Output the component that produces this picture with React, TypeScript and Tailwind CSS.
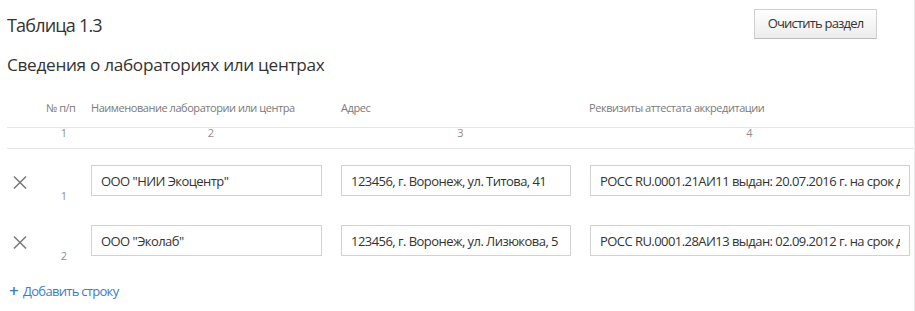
import React from 'react'

const rows = [
    {
        n: 1,
        name: 'ООО "НИИ Экоцентр"',
        address: '123456, г. Воронеж, ул. Титова, 41',
        cert: 'РОСС RU.0001.21АИ11 выдан: 20.07.2016 г. на срок до 20.07.2021 г.'
    },
    {
        n: 2,
        name: 'ООО "Эколаб"',
        address: '123456, г. Воронеж, ул. Лизюкова, 5',
        cert: 'РОСС RU.0001.28АИ13 выдан: 02.09.2012 г. на срок до 02.09.2017 г.'
    }
]

const grid = 'grid grid-cols-[37px_42px_250px_249px_329px]'
const field =
    'h-[31px] border border-[#d2d2d2] bg-white px-[9px] text-[13px] text-[#333] tracking-[-0.55px] outline-none'

function CloseIcon() {
    return (
        <svg width="14" height="13" viewBox="0 0 14 13" className="block">
            <path
                d="M1 0.5 L13 12.5 M13 0.5 L1 12.5"
                stroke="#7a7a7a"
                strokeWidth="1.5"
                fill="none"
            />
        </svg>
    )
}

export default function App() {
    return (
        <div className="w-[915px] h-[311px] bg-white border-r border-[#ececec] pl-[7px] font-['Open_Sans',sans-serif] text-[#333]">
            <div className="flex justify-between items-start pt-[9px] pr-[37px]">
                <h1 className="text-[18px] leading-[24px] pt-[4px] text-[#333] tracking-[-0.8px]">
                    Таблица 1.3
                </h1>
                <button className="h-[30px] w-[123px] border border-[#d0d0d0] border-b-[#bcbcbc] bg-gradient-to-b from-[#ffffff] to-[#ececec] text-[13px] text-[#333] tracking-[-0.8px]">
                    Очистить раздел
                </button>
            </div>

            <h2 className="text-[17.2px] leading-[24px] mt-[14px] tracking-[-0.3px]">
                Сведения о лабораториях или центрах
            </h2>

            <div className={`${grid} mt-[23px] h-[28px] border-b border-[#e6e6e6] text-[11px] leading-[15px] text-[#7a7a7a] tracking-[-0.45px] items-start`}>
                <div />
                <div className="pl-[2px]">№ п/п</div>
                <div className="pl-[5px]">Наименование лаборатории или центра</div>
                <div className="pl-[5px]">Адрес</div>
                <div className="pl-[4px]">Реквизиты аттестата аккредитации</div>
            </div>

            <div className={`${grid} h-[21px] border-b border-[#e6e6e6] text-[11px] leading-[9px] text-[#8f8f8f] items-start`}>
                <div />
                <div className="text-center pr-[2px]">1</div>
                <div className="text-center">2</div>
                <div className="text-center">3</div>
                <div className="text-center">4</div>
            </div>

            {rows.map((r) => (
                <div key={r.n} className={`${grid} h-[60px] pt-[16px]`}>
                    <div className="pl-[6px] pt-[11px]">
                        <CloseIcon />
                    </div>
                    <div className="flex items-end justify-center pb-[6px] pr-[2px] text-[11px] leading-[15px] text-[#8f8f8f]">
                        {r.n}
                    </div>
                    <div className="pl-[5px]">
                        <input readOnly value={r.name} className={`w-[231px] ${field}`} />
                    </div>
                    <div className="pl-[5px]">
                        <input readOnly value={r.address} className={`w-[230px] ${field}`} />
                    </div>
                    <div className="pl-[5px]">
                        <input readOnly value={r.cert} className={`w-[320px] ${field}`} />
                    </div>
                </div>
            ))}

            <a
                href="#"
                className="inline-flex items-center mt-[13px] ml-[2px] text-[13px] leading-[18px] text-[#3d7cc9] tracking-[-0.7px]"
            >
                <span className="text-[17px] leading-[16px] font-semibold mr-[5px]">+</span>
                Добавить строку
            </a>
        </div>
    )
}
